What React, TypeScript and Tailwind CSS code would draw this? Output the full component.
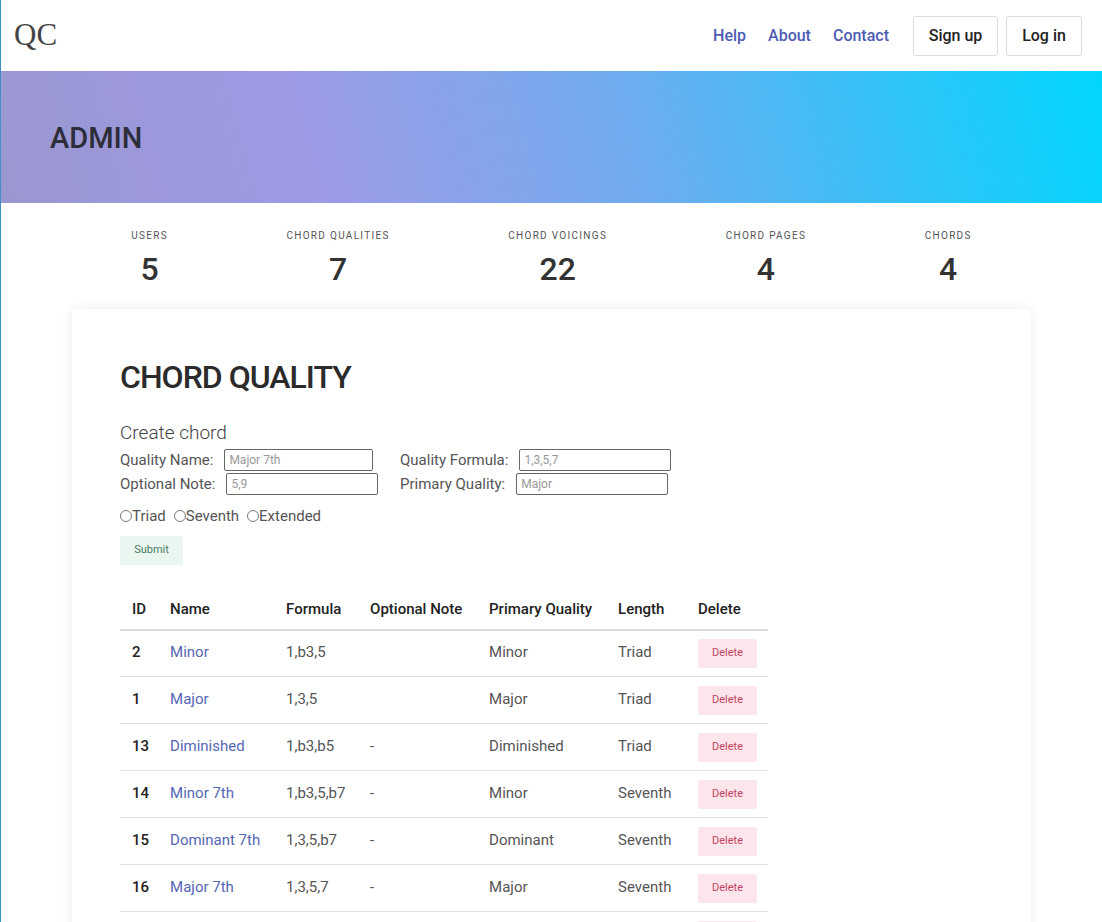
import { useState } from 'react';

const font = { fontFamily: 'Roboto, "Liberation Sans", sans-serif' };

const stats = [
  { label: 'Users', value: 5 },
  { label: 'Chord Qualities', value: 7 },
  { label: 'Chord Voicings', value: 22 },
  { label: 'Chord Pages', value: 4 },
  { label: 'Chords', value: 4 },
];

const rows = [
  { id: 2, name: 'Minor', formula: '1,b3,5', note: '', primary: 'Minor', length: 'Triad' },
  { id: 1, name: 'Major', formula: '1,3,5', note: '', primary: 'Major', length: 'Triad' },
  { id: 13, name: 'Diminished', formula: '1,b3,b5', note: '-', primary: 'Diminished', length: 'Triad' },
  { id: 14, name: 'Minor 7th', formula: '1,b3,5,b7', note: '-', primary: 'Minor', length: 'Seventh' },
  { id: 15, name: 'Dominant 7th', formula: '1,3,5,b7', note: '-', primary: 'Dominant', length: 'Seventh' },
  { id: 16, name: 'Major 7th', formula: '1,3,5,7', note: '-', primary: 'Major', length: 'Seventh' },
  { id: 17, name: 'Augmented', formula: '1,3,#5', note: '-', primary: 'Augmented', length: 'Triad' },
];

function Field({ label, placeholder, inputClass }: { label: string; placeholder: string; inputClass: string }) {
  return (
    <label className="flex items-center gap-[11px] text-[15px] leading-[22px] text-[#555]">
      <span>{label}</span>
      <input
        placeholder={placeholder}
        className={`h-[22px] rounded-[2px] border border-[#666] px-[4px] text-[12px] placeholder:text-[#999] ${inputClass}`}
      />
    </label>
  );
}

export default function App() {
  const [length, setLength] = useState('');

  return (
    <div className="min-h-screen border-l border-[#3d8fc4] bg-white text-[#333]" style={font}>
      <nav className="flex h-[71px] items-center justify-between pl-[13px] pr-[20px]">
        <span className="text-[31px] text-[#444]" style={{ fontFamily: '"Liberation Serif", serif' }}>
          QC
        </span>
        <div className="flex items-center">
          <a className="text-[16px] font-medium text-[#4d5cb3]">Help</a>
          <a className="ml-[22px] text-[16px] font-medium text-[#4d5cb3]">About</a>
          <a className="ml-[22px] text-[16px] font-medium text-[#4d5cb3]">Contact</a>
          <button className="ml-[24px] h-[40px] w-[85px] rounded-[3px] border border-[#ddd] text-[16px] font-medium text-[#222]">
            Sign up
          </button>
          <button className="ml-[8px] h-[40px] w-[76px] rounded-[3px] border border-[#ddd] text-[16px] font-medium text-[#222]">
            Log in
          </button>
        </div>
      </nav>

      <header className="flex h-[132px] items-center bg-[linear-gradient(75deg,#9a97d0_0%,#9e9ae6_28%,#74aaee_55%,#00d6ff_100%)] pl-[49px]">
        <h1 className="pt-[4px] text-[29px] font-medium text-[#2e2d3a]">ADMIN</h1>
      </header>

      <div className="mx-[71px] flex justify-around pt-[25px]">
        {stats.map((s) => (
          <div key={s.label} className="flex flex-col items-center">
            <span className="text-[10px] uppercase tracking-[1.3px] text-[#555]">{s.label}</span>
            <span className="mt-[6px] text-[32px] font-medium leading-[40px] text-[#333]">{s.value}</span>
          </div>
        ))}
      </div>

      <main className="mx-[71px] mt-[20px] rounded-[4px] bg-white px-[48px] pt-[46px] pb-[40px] shadow-[0_0_12px_rgba(0,0,0,0.08)]">
        <h2 className="text-[32px] font-medium leading-[44px] tracking-[-1px] text-[#2b2b2b]">CHORD QUALITY</h2>

        <h3 className="mt-[22px] text-[19px] font-light leading-[24px] text-[#444]">Create chord</h3>
        <div className="mt-[4px] grid w-fit grid-cols-[280px_auto] gap-y-[2px]">
          <Field label="Quality Name:" placeholder="Major 7th" inputClass="w-[149px]" />
          <Field label="Quality Formula:" placeholder="1,3,5,7" inputClass="w-[152px]" />
          <Field label="Optional Note:" placeholder="5,9" inputClass="w-[152px]" />
          <Field label="Primary Quality:" placeholder="Major" inputClass="w-[152px]" />
        </div>

        <div className="mt-[10px] flex items-center gap-[8px] text-[15px] text-[#555]">
          {['Triad', 'Seventh', 'Extended'].map((l) => (
            <label key={l} className="flex items-center">
              <input
                type="radio"
                name="length"
                checked={length === l}
                onChange={() => setLength(l)}
                className="m-0 h-[12px] w-[12px]"
              />
              <span>{l}</span>
            </label>
          ))}
        </div>

        <button className="mt-[8px] h-[29px] w-[63px] rounded-[2px] bg-[#eaf7f0] text-[11px] text-[#4a7a62]">
          Submit
        </button>

        <table className="mt-[26px] border-collapse text-left text-[15px]">
          <thead>
            <tr className="border-b-2 border-[#dcdcdc]">
              <th className="h-[39px] pl-[12px] pr-[12px] font-medium text-[#222]">ID</th>
              <th className="w-[116px] pl-[12px] font-medium text-[#222]">Name</th>
              <th className="w-[84px] pl-[12px] font-medium text-[#222]">Formula</th>
              <th className="w-[119px] pl-[12px] font-medium text-[#222]">Optional Note</th>
              <th className="w-[129px] pl-[12px] font-medium text-[#222]">Primary Quality</th>
              <th className="w-[80px] pl-[12px] font-medium text-[#222]">Length</th>
              <th className="w-[82px] pl-[12px] pr-[12px] font-medium text-[#222]">Delete</th>
            </tr>
          </thead>
          <tbody>
            {rows.map((r) => (
              <tr key={r.id} className="h-[47px] border-b border-[#e2e2e2] text-[#555]">
                <td className="pb-[2px] pl-[12px] font-medium text-[#222]">{r.id}</td>
                <td className="pb-[2px] pl-[12px] text-[#5566b5]">{r.name}</td>
                <td className="pb-[2px] pl-[12px]">{r.formula}</td>
                <td className="pb-[2px] pl-[12px]">{r.note}</td>
                <td className="pb-[2px] pl-[12px]">{r.primary}</td>
                <td className="pb-[2px] pl-[12px]">{r.length}</td>
                <td className="pl-[12px]">
                  <button className="h-[29px] w-[59px] rounded-[2px] bg-[#fde5ec] text-[11px] text-[#c24462]">
                    Delete
                  </button>
                </td>
              </tr>
            ))}
          </tbody>
        </table>
      </main>
    </div>
  );
}
